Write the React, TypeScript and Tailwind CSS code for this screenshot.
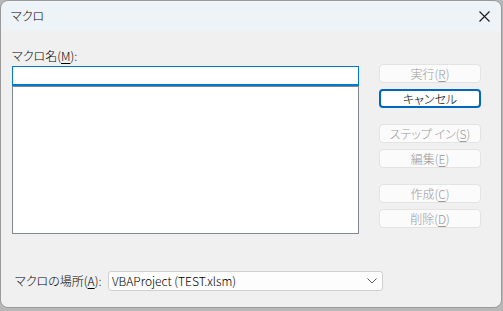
import React from 'react'

const font = { fontFamily: '"Noto Sans CJK JP", "Noto Sans", sans-serif' }

const Key = ({ k }: { k: string }) => (
    <span>(<span className="underline underline-offset-2">{k}</span>)</span>
)

interface SideButtonProps {
    label: string;
    k?: string;
    disabled?: boolean;
    focused?: boolean;
    className?: string;
}

const SideButton = ({ label, k, disabled, focused, className = '' }: SideButtonProps) => (
    <button
        className={`w-[102px] h-[19px] flex items-center justify-center rounded-[4px] text-[12px] leading-none font-light ${
            focused
                ? 'bg-white border-2 border-[#0067c0] text-black'
                : 'bg-[#fbfbfb] border border-[#e3e3e3] text-[#9a9a9a]'
        } ${disabled ? 'cursor-default' : ''} ${className}`}
    >
        <span>{label}</span>
        {k && <Key k={k} />}
    </button>
)

export default function App() {
    return (
        <div className="w-[503px] h-[311px] bg-[#b8b8b8] overflow-hidden font-light [font-feature-settings:'palt']" style={font}>
            <div className="w-[502px] h-[308px] flex flex-col rounded-[8px] border border-[#9a9a9a] overflow-hidden">
                {/* title bar */}
                <div className="h-[30px] bg-[#eef3f8] flex items-center justify-between pl-[10px] pr-[10px]">
                    <span className="text-[12px] text-black">マクロ</span>
                    <svg width="11" height="11" viewBox="0 0 11 11" className="mr-[1px]">
                        <path d="M0.5 0.5 L10.5 10.5 M10.5 0.5 L0.5 10.5" stroke="#1a1a1a" strokeWidth="1.1" />
                    </svg>
                </div>

                {/* body */}
                <div className="flex-1 bg-[#f0f0f0] pt-[16px] pl-[11px] flex flex-col">
                    <div className="flex gap-[20px]">
                        <div className="w-[347px] flex flex-col">
                            <div className="h-[17px] text-[12px] leading-[17px] text-black">
                                マクロ名<Key k="M" />:
                            </div>
                            <div className="mt-[2px] h-[20px] bg-white border border-[#0078d4] border-b-2" />
                            <div className="h-[148px] bg-white border border-[#828790]" />
                        </div>
                        <div className="pt-[17px] flex flex-col">
                            <SideButton label="実行" k="R" disabled />
                            <SideButton label="キャンセル" focused className="mt-[6px]" />
                            <SideButton label="ステップ イン" k="S" disabled className="mt-[16px]" />
                            <SideButton label="編集" k="E" disabled className="mt-[6px]" />
                            <SideButton label="作成" k="C" disabled className="mt-[16px]" />
                            <SideButton label="削除" k="D" disabled className="mt-[6px]" />
                        </div>
                    </div>

                    <div className="mt-[37px] flex items-center">
                        <div className="w-[96px] pl-[3px] text-[12px] text-black">
                            マクロの場所<Key k="A" />:
                        </div>
                        <div className="w-[275px] h-[20px] bg-[#fdfdfd] border border-[#d0d0d0] rounded-[3px] flex items-center justify-between pl-[3px] pr-[5px]">
                            <span className="text-[12px] text-black">VBAProject (TEST.xlsm)</span>
                            <svg width="10" height="6" viewBox="0 0 10 6">
                                <path d="M0.5 0.5 L5 5 L9.5 0.5" fill="none" stroke="#5a5a5a" strokeWidth="1" />
                            </svg>
                        </div>
                    </div>
                </div>
            </div>
        </div>
    )
}
